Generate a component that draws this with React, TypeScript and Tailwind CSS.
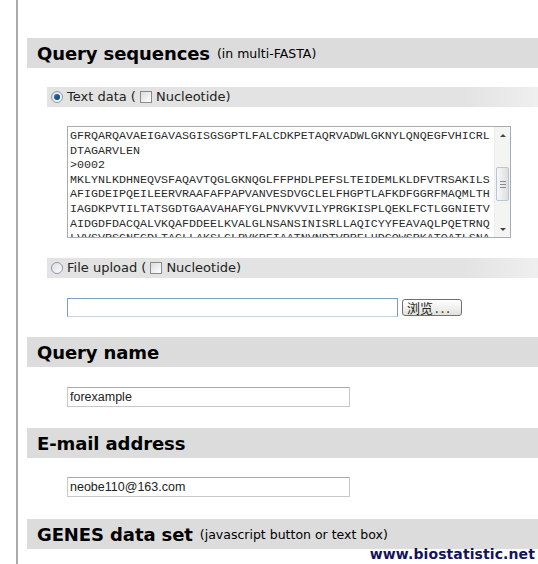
import React from 'react'

const seqLines = [
  'GFRQARQAVAEIGAVASGISGSGPTLFALCDKPETAQRVADWLGKNYLQNQEGFVHICRL',
  'DTAGARVLEN',
  '>0002',
  'MKLYNLKDHNEQVSFAQAVTQGLGKNQGLFFPHDLPEFSLTEIDEMLKLDFVTRSAKILS',
  'AFIGDEIPQEILEERVRAAFAFPAPVANVESDVGCLELFHGPTLAFKDFGGRFMAQMLTH',
  'IAGDKPVTILTATSGDTGAAVAHAFYGLPNVKVVILYPRGKISPLQEKLFCTLGGNIETV',
  'AIDGDFDACQALVKQAFDDEELKVALGLNSANSINISRLLAQICYYFEAVAQLPQETRNQ',
  'LVVSVPSGNFGDLTAGLLAKSLGLPVKRFIAATNVNDTVPRFLHDGQWSPKATQATLSNA',
]

const verdana = { fontFamily: '"DejaVu Sans", Verdana, sans-serif' }

function SectionHeader({ title, note }: { title: string; note?: string }) {
  return (
    <div className="h-[30px] bg-[#dcdcdc] flex items-center pl-[10px] text-black" style={verdana}>
      <span className="text-[18px] font-bold tracking-[-0.1px]">{title}</span>
      {note && <span className="text-[12.5px] ml-[7px] mt-[3px]">{note}</span>}
    </div>
  )
}

function Radio({ checked }: { checked?: boolean }) {
  return (
    <span className="w-[12px] h-[12px] rounded-full border border-[#8a9bb0] bg-gradient-to-br from-[#dcdcdc] to-white flex items-center justify-center">
      {checked && <span className="w-[6px] h-[6px] rounded-full bg-gradient-to-br from-[#2a6fb8] to-[#0c3f80]" />}
    </span>
  )
}

function Checkbox() {
  return <span className="w-[12px] h-[12px] border border-[#8a8a8a] bg-gradient-to-br from-[#dcdcdc] to-white" />
}

function OptionBar({ label, checked }: { label: string; checked?: boolean }) {
  return (
    <div
      className="ml-[20px] h-[20px] flex items-center pl-[4px] gap-[4px] text-[13px] text-[#222] bg-gradient-to-r from-[#e3e3e3] via-[#e3e3e3] via-85% to-[#efefef]"
      style={verdana}
    >
      <Radio checked={checked} />
      <span>{label} (</span>
      <Checkbox />
      <span>Nucleotide)</span>
    </div>
  )
}

function TextField({ value }: { value: string }) {
  return (
    <div className="ml-[40px] w-[283px] h-[20px] border border-[#c8c8c8] border-t-[#a8a8a8] flex items-center pl-[2px] text-[12.5px] text-[#222] font-['Liberation_Sans',Arial,sans-serif]">
      {value}
    </div>
  )
}

export default function App() {
  return (
    <div className="relative w-[538px] h-[564px] overflow-hidden bg-white pl-4">
      <div className="h-full border-l-2 border-[#ababab] pl-[9px] pt-[38px] flex flex-col">
        <SectionHeader title="Query sequences" note="(in multi-FASTA)" />

        <div className="mt-[19px]">
          <OptionBar label="Text data" checked />
        </div>

        {/* textarea with fasta content, scrolled part way */}
        <div className="mt-[19px] ml-[40px] w-[444px] h-[112px] border border-[#a5acb5] flex overflow-hidden">
          <div className="flex-1 overflow-hidden pl-[2px] pt-[2px] text-[11.67px] leading-[14.6px] text-[#2a2a2a] font-['Liberation_Mono','Courier_New',monospace] whitespace-pre">
            {seqLines.map((l, i) => (
              <div key={i}>{l}</div>
            ))}
          </div>
          <div className="w-[16px] flex flex-col bg-[#f4f4f2] border-l border-[#eeeeee]">
            <div className="h-[16px] flex items-center justify-center">
              <span className="w-0 h-0 border-l-[3px] border-r-[3px] border-b-[3px] border-l-transparent border-r-transparent border-b-[#444]" />
            </div>
            <div className="h-[24px]" />
            <div className="h-[34px] mx-[1px] rounded-[2px] border border-[#b8c4d8] bg-gradient-to-r from-[#f8f8f8] to-[#dedede] flex flex-col items-center justify-center gap-[2px]">
              <span className="w-[6px] h-px bg-[#8a8a8a]" />
              <span className="w-[6px] h-px bg-[#8a8a8a]" />
              <span className="w-[6px] h-px bg-[#8a8a8a]" />
            </div>
            <div className="flex-1" />
            <div className="h-[16px] flex items-center justify-center">
              <span className="w-0 h-0 border-l-[3px] border-r-[3px] border-t-[3px] border-l-transparent border-r-transparent border-t-[#444]" />
            </div>
          </div>
        </div>

        <div className="mt-[20px]">
          <OptionBar label="File upload" />
        </div>

        <div className="mt-[20px] ml-[40px] flex items-center gap-[4px]">
          <div className="w-[331px] h-[19px] border border-[#7f9db9] border-b-[#c5d2df] bg-white" />
          <button
            className="w-[60px] h-[17px] rounded-[3px] border border-[#707070] bg-gradient-to-b from-white to-[#e2e2dc] text-[13px] leading-none text-[#222] flex items-center pl-[4px] font-['Noto_Sans_CJK_SC',sans-serif]"
          >
            浏览<span className="tracking-[2px] ml-[2px]">...</span>
          </button>
        </div>

        <div className="mt-[20px]">
          <SectionHeader title="Query name" />
        </div>
        <div className="mt-[20px]">
          <TextField value="forexample" />
        </div>

        <div className="mt-[21px]">
          <SectionHeader title="E-mail address" />
        </div>
        <div className="mt-[19px]">
          <TextField value="neobe110@163.com" />
        </div>

        <div className="mt-[22px]">
          <SectionHeader title="GENES data set" note="(javascript button or text box)" />
        </div>
      </div>

      {/* watermark */}
      <div className="absolute right-[3px] bottom-[3px] text-[14px] leading-none font-black tracking-[0.1px] text-[#14145c] font-['DejaVu_Sans',sans-serif]">
        www.biostatistic.net
      </div>
    </div>
  )
}
